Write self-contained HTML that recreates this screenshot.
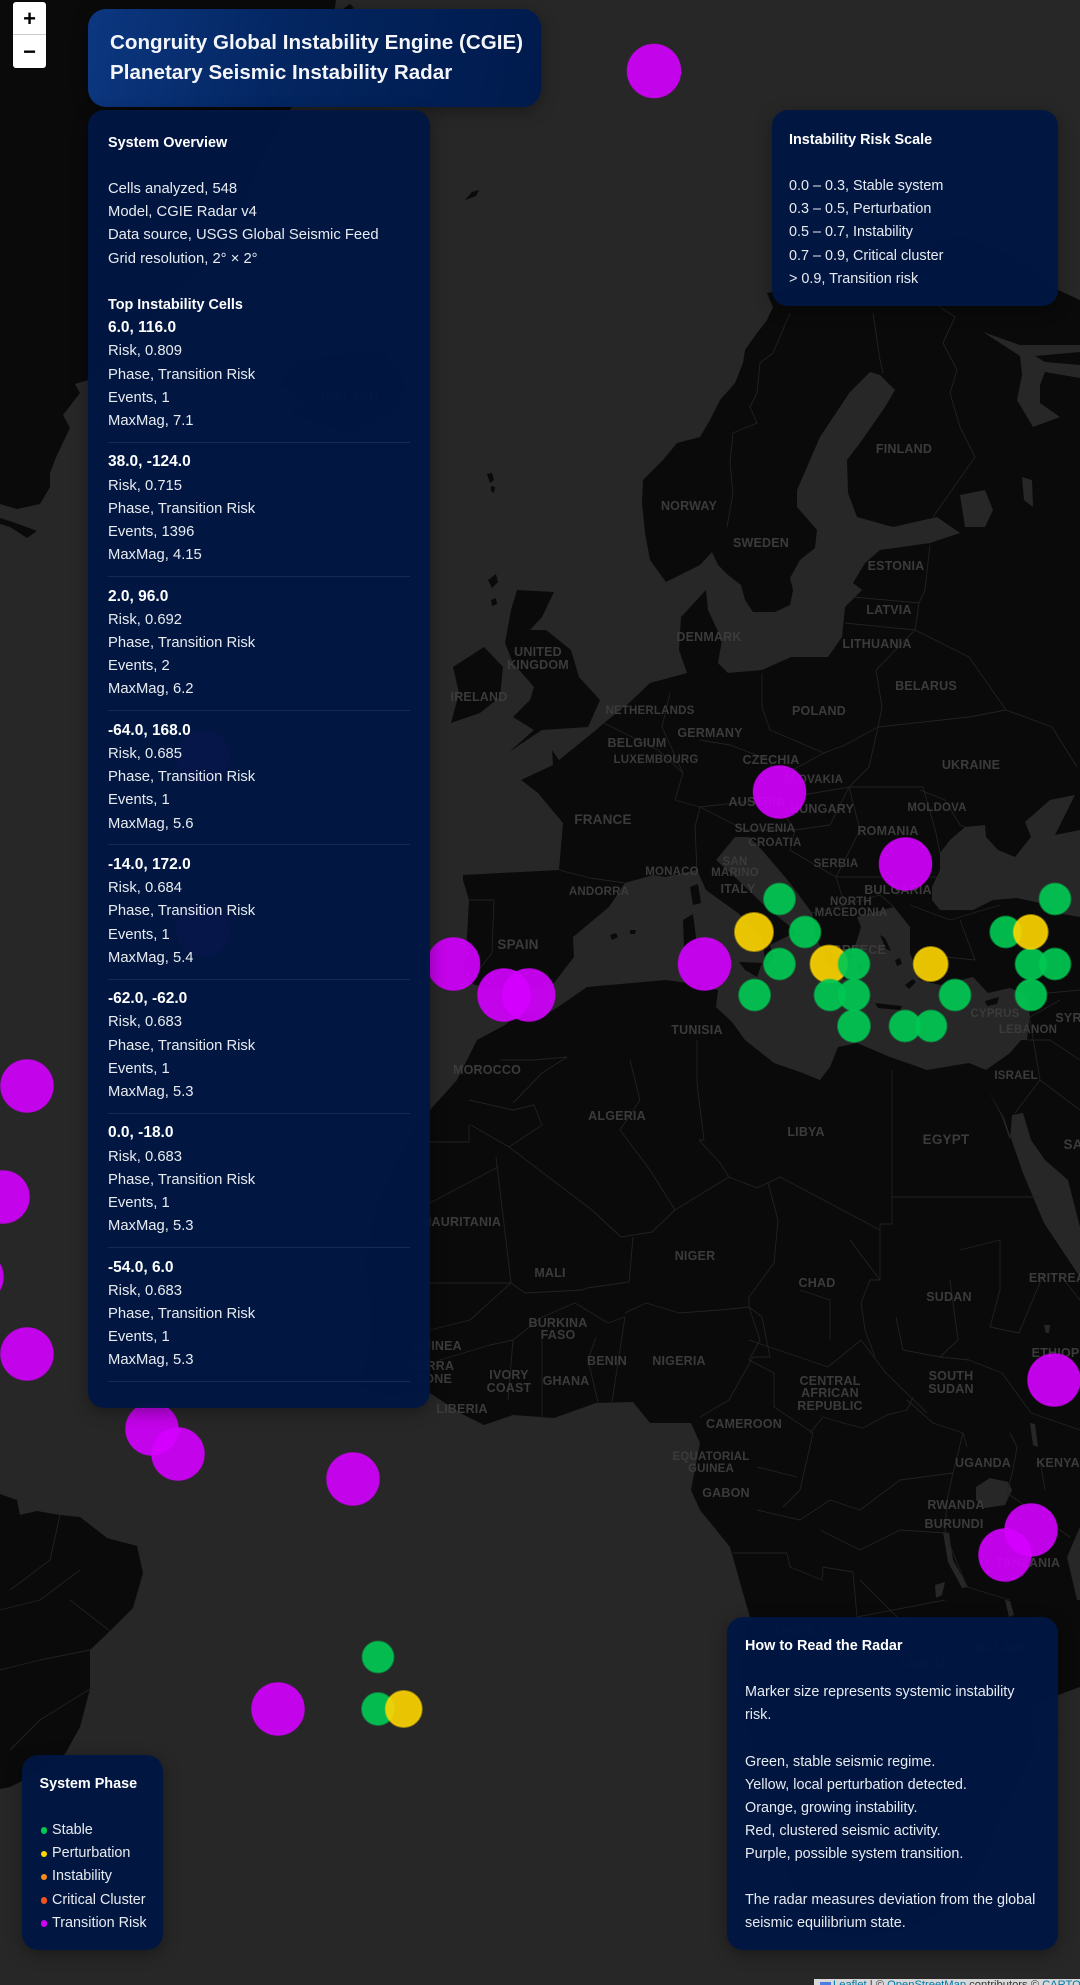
<!DOCTYPE html>
<html lang="en"><head><meta charset="utf-8"><title>CGIE Radar</title>
<style>
html,body{margin:0;padding:0;background:#272727;width:1080px;height:1985px;overflow:hidden}
body{position:relative;font-family:"Liberation Sans",Arial,sans-serif;color:#e8ebf0;filter:blur(.35px)}
svg.map{position:absolute;left:0;top:0}
.lbl text{font:bold 12.5px "Liberation Sans",Arial,sans-serif;fill:#3b3b3b;text-anchor:middle;letter-spacing:.2px}
.p{position:absolute;box-sizing:border-box;background:rgba(0,23,66,.965);border-radius:16px;box-shadow:0 4px 16px rgba(0,0,0,.35);font-size:14.4px;line-height:23.2px;overflow:hidden}
.p b{color:#fff}
.blk{border-bottom:1px solid rgba(255,255,255,.09);padding-bottom:8.7px;margin-bottom:8.5px}
.blk b{font-size:15.5px;line-height:0}
#title{left:88px;top:9px;width:453px;height:98px;padding:19px 0 0 22px;border-radius:18px;background:linear-gradient(100deg,#0c3780 0%,#032560 45%,#001a4c 100%);font-size:20.6px;line-height:30.4px;font-weight:bold;color:#f4f6fa;white-space:nowrap}
#ov{left:88px;top:110px;width:342px;height:1298px;padding:21.5px 20px 0 20px;font-size:14.8px}
#ov>b{font-size:14.4px;line-height:0}
#risk{left:772px;top:110px;width:286px;height:196px;padding:18.6px 17px 0 17px}
#how{left:727px;top:1617px;width:331px;height:333px;padding:18.2px 18px 0 18px;line-height:23.1px}
#phase{left:22px;top:1755px;width:141px;height:195px;padding:17.5px 0 0 17.5px;white-space:nowrap}
.d{display:inline-block;width:6.5px;height:6.5px;border-radius:50%;margin:0 5px 0 1px;vertical-align:0}
#zoom{position:absolute;left:13px;top:2px;width:33px;height:66px;background:#fff;border-radius:3px;box-shadow:0 0 0 1px rgba(0,0,0,.25)}
#zoom div{height:33px;box-sizing:border-box;text-align:center;color:#000;font:bold 22px/33px "Liberation Sans",Arial,sans-serif}
#zoom div:first-child{border-bottom:1px solid #ccc}
#attr{position:absolute;left:814px;top:1979px;width:266px;height:6px;background:rgba(255,255,255,.82);overflow:hidden;white-space:nowrap;font:11.2px/14px "Liberation Sans",Arial,sans-serif;color:#333}
#attr span{position:absolute;left:19px;top:-1px}
#attr i{position:absolute;left:6px;top:3px;width:11px;height:4px;background:#4c7be1}
#attr a{color:#0078a8;text-decoration:none}
</style></head><body>
<svg class="map" width="1080" height="1985" viewBox="0 0 1080 1985">
<rect width="1080" height="1985" fill="#272727"/>
<g fill="#0a0a0a">
<path d="M0,0L336,0 332,30 300,80 292,107 260,160 230,240 170,300 120,350 88,380 75,384 80,393 63,415 70,428 57,455 50,473 50,487 40,504 17,509 0,504Z"/>
<path d="M0,518L13,522 37,531 27,538 10,527 0,524Z"/>
<path d="M280,385L300,360 340,355 385,352 407,385 395,410 350,433 310,420 290,415 305,400Z"/>
<path d="M465,200L472,192 479,190 476,196Z"/>
<path d="M343,9L350,4 354,8 347,12Z"/>
<path d="M487,474l5,-1 2,7 -4,3zM491,486l4,1 -1,6 -3,-2zM488,580l8,-6 2,8 -6,6zM491,600l5,-2 1,6 -5,2z"/>
<path d="M1080,300L1058,290 1010,255 960,235 900,258 850,282 800,288 772,292 767,293 773,307 767,320 757,333 745,350 743,363 735,383 720,400 710,420 700,437 677,443 663,460 643,480 642,503 645,533 650,560 666,582 680,575 700,565 712,552 718,565 728,575 741,585 745,600 753,612 775,612 790,605 793,590 790,578 800,560 815,548 817,530 797,507 797,490 820,437 850,392 870,372 880,375 895,390 885,407 860,443 847,460 848,493 857,517 893,527 937,517 960,533 930,543 880,550 865,563 853,583 862,590 845,607 842,637 828,657 791,657 762,670 728,673 718,663 722,640 708,610 706,590 681,617 679,650 687,673 650,683 629,703 604,723 596,730 559,760 552,750 553,765 521,780 538,793 563,823 559,870 463,875 463,880 469,900 467,937 463,977 475,985 505,990 517,993 554,983 574,957 573,937 609,907 625,883 653,875 665,877 697,870 706,890 738,913 763,937 765,967 774,957 770,945 790,935 803,937 766,907 738,880 716,860 735,837 749,837 762,850 790,883 812,913 816,937 828,963 845,980 853,953 861,927 857,917 894,907 910,927 910,953 920,980 940,985 973,977 988,993 1010,988 1027,995 1030,1017 1027,1040 1021,1040 1010,1053 986,1070 969,1063 927,1070 890,1057 857,1043 838,1047 830,1067 820,1080 800,1072 774,1063 745,1040 732,1022 716,1007 718,990 700,985 687,983 666,980 587,987 558,1007 542,1017 520,1012 505,1025 477,1040 457,1080 430,1110 420,1120 395,1165 375,1210 365,1265 372,1310 370,1345 360,1385 385,1395 430,1393 460,1413 484,1425 513,1415 554,1418 596,1403 633,1402 650,1423 691,1423 700,1443 691,1490 700,1510 730,1547 743,1593 750,1617 740,1670 745,1720 770,1800 790,1880 810,1930 850,1935 905,1930 955,1905 985,1860 1000,1815 1035,1750 1031,1705 1080,1687 1080,1600 1077,1600 1067,1557 1080,1527Z"/>
<path d="M517,590L554,592 542,617 530,630 546,630 571,650 579,677 600,700 588,727 542,730 509,752 534,730 513,717 530,700 534,687 513,663 505,643 511,610Z"/>
<path d="M453,667L484,647 503,667 500,697 480,713 451,723 459,693Z"/>
<path d="M739,962L762,963 757,977 745,970Z"/>
<path d="M683,920L693,914 697,945 684,947Z"/>
<path d="M690,887L698,884 701,903 693,905Z"/>
<path d="M610,935l6,-2 2,4 -6,3zM630,930l6,0 -1,4 -5,0z"/>
<path d="M875,1003L902,1006 900,1010 878,1008Z"/>
<path d="M985,1001l14,-4 -2,7 -10,2z"/>
<path d="M880,935l5,3 6,13 -5,-2zM895,960l5,-2 2,6 -5,2zM905,985l8,-6 3,3 -7,7zM858,965l3,-3 2,8 -3,2z"/>
<path d="M0,1494L17,1500 20,1515 37,1511 60,1515 80,1517 107,1538 137,1546 143,1573 133,1608 110,1631 90,1650 90,1689 80,1727 65,1754 22,1781 10,1787 0,1789Z"/>
</g>
<g fill="#272727">
<path d="M940,853L950,840 965,827 985,825 986,837 998,850 1015,857 1031,837 1025,822 1050,800 1075,795 1060,825 1055,835 1080,830 1080,917 1057,913 1040,903 1017,898 993,900 973,910 940,910 932,900 932,887 940,870Z"/>
<path d="M988,1090L1004,1118 1023,1173 1044,1223 1064,1253 1080,1277 1080,1227 1068,1180 1045,1160 1031,1140 1023,1113 1012,1115 1010,1140 1002,1117Z"/>
<path d="M983,332L1000,343 1020,356 1022,375 1017,400 1033,427 1060,417 1040,403 1040,385 1045,372 1080,378 1080,365 1045,362 1035,356 1080,352 1080,345 1020,345Z"/>
<path d="M960,495L985,490 993,510 985,527 965,527Z"/>
<path d="M1022,477L1032,480 1033,507 1024,500Z"/>
<path d="M976,1487L990,1478 1008,1482 1012,1490 1005,1505 985,1508 976,1500Z"/>
<path d="M943,1532L949,1533 953,1560 968,1587 962,1588 948,1562Z"/>
<path d="M1005,1600L1010,1601 1014,1615 1009,1617Z"/>
<path d="M1030,1423L1035,1424 1038,1447 1033,1445Z"/>
<path d="M1044,1325L1050,1325 1049,1333 1046,1333Z"/>
<path d="M935,1585L945,1582 942,1595 936,1598Z"/>
<path d="M726,655l8,-5 4,8 -6,3z"/>
</g>
<g fill="none" stroke="#222" stroke-width=".9" stroke-linejoin="round">
<path d="M790,313L773,353 760,363 757,393 750,407 757,423 733,433 730,463 733,493 727,527"/>
<path d="M873,313L880,360 883,373M940,307L955,317 943,343 957,370 950,393 960,427 975,457 933,517"/>
<path d="M853,597L919,603M845,623L915,630M876,670L882,707 878,727 969,717 1006,710 1052,727 1077,767M915,630L969,657 1006,710M930,545L925,590 919,603 915,630 876,670"/>
<path d="M762,673L762,707 770,730 824,753 845,745 878,727M878,727L869,767 849,787"/>
<path d="M683,773L675,800M670,693L662,727 683,773M604,723L658,750 683,773M675,800L700,807 762,800 774,780 770,760 730,745 700,740"/>
<path d="M774,800L849,787 923,787 936,833 940,853M836,877L940,877M824,753L774,780M774,800L795,830 830,825 849,787 860,830 836,877 845,905 812,913M745,830L795,830 790,850 815,865 836,877"/>
<path d="M920,790L945,800 960,825 965,827"/>
<path d="M559,870L590,878 625,883M469,900L494,900 492,953 471,980M697,870L695,827 700,807 745,830"/>
<path d="M845,905L880,895 894,907M1027,995L1080,990M1030,1017L1060,1000M1027,1040L1050,1040 1080,1060"/>
<path d="M910,905L950,920 1000,905M960,920L975,960M1000,920L1040,960M925,955L975,960"/>
<path d="M471,1125L509,1147 592,1210 621,1237 652,1232 675,1210 729,1177 757,1188 780,1177 880,1230 880,1224 892,1224 892,1112 892,1070"/>
<path d="M892,1197L1039,1197M880,1230L880,1280 870,1280 861,1303 865,1330 875,1357"/>
<path d="M768,1183L778,1220 774,1263 749,1297 749,1307M697,1040L697,1083 704,1140 699,1140 720,1163 729,1177"/>
<path d="M496,1157L511,1283 430,1283M469,1100L513,1110 534,1105 542,1125 509,1147M469,1125L469,1142 430,1142M430,1203L498,1167"/>
<path d="M534,1060L567,1057 542,1073 513,1103M500,1060L534,1060M630,1060L640,1100 620,1130 650,1170 675,1210"/>
<path d="M810,1433L823,1417 843,1423 863,1428 887,1415 907,1410 913,1397M907,1400L933,1423 963,1433 967,1447"/>
<path d="M1010,1433L1017,1447 1013,1470 1007,1493 1070,1537M963,1433L953,1473 947,1500 945,1533 967,1587 1010,1600"/>
<path d="M733,1553L787,1553 790,1567 822,1580 823,1567 853,1572 857,1617 945,1600"/>
<path d="M783,1507L800,1490 813,1433 774,1407 774,1373M757,1467L797,1477"/>
<path d="M762,1317L770,1357 753,1357 729,1400 700,1417M625,1313L646,1303 679,1313 720,1310 749,1307 762,1317"/>
<path d="M625,1317L612,1402M596,1337L588,1360 598,1402M542,1340L542,1417M511,1283L525,1293 583,1290 587,1288 629,1282 633,1237"/>
<path d="M513,1340L542,1317 575,1303 608,1323 625,1317M430,1330L470,1320 511,1283M490,1345L513,1340 508,1400M440,1360L490,1345"/>
<path d="M896,1317L903,1350 940,1357 969,1360 1002,1373 1031,1413M990,1327L1019,1333 1044,1273M861,1340L886,1373 927,1413"/>
<path d="M749,1340L828,1367 861,1340M749,1307L760,1340 749,1360 774,1373M800,1290L830,1300 830,1340M1031,1413L1080,1430M1040,1460L1045,1490"/>
<path d="M960,1250L1000,1240 1000,1290 990,1327M950,1280L958,1340 940,1357M850,1240L880,1280"/>
<path d="M1040,1080L1080,1110M1030,1020L1040,1080 1015,1113M1060,1275L1080,1300"/>
<path d="M757,1510L800,1520 830,1500 860,1510 900,1480 953,1473M820,1530L860,1550 900,1530 945,1533"/>
<path d="M860,1580L900,1620 950,1650 1000,1700M780,1700L850,1690 900,1720 950,1800"/>
<path d="M60,1515L50,1560 10,1590M80,1570L40,1600 0,1610M110,1631L70,1600M90,1650L40,1660 0,1670M90,1689L40,1720 10,1750"/>
</g>
<g class="lbl">
<text x="350" y="401">ICELAND</text>
<text x="904" y="453">FINLAND</text><text x="689" y="510">NORWAY</text><text x="761" y="547">SWEDEN</text>
<text x="896" y="570">ESTONIA</text><text x="889" y="614">LATVIA</text><text x="877" y="648">LITHUANIA</text>
<text x="538" y="656">UNITED</text><text x="538" y="669">KINGDOM</text><text x="479" y="701">IRELAND</text>
<text x="709" y="641">DENMARK</text><text x="650" y="714" style="font-size:11.5px">NETHERLANDS</text><text x="710" y="737">GERMANY</text>
<text x="637" y="747">BELGIUM</text><text x="656" y="763" style="font-size:11.5px">LUXEMBOURG</text><text x="771" y="764">CZECHIA</text>
<text x="819" y="715">POLAND</text><text x="926" y="690">BELARUS</text><text x="971" y="769">UKRAINE</text>
<text x="813" y="783" style="font-size:11.5px">SLOVAKIA</text><text x="937" y="811" style="font-size:11.5px">MOLDOVA</text>
<text x="757" y="806">AUSTRIA</text><text x="822" y="813">HUNGARY</text><text x="603" y="824" style="font-size:13.5px">FRANCE</text>
<text x="888" y="835">ROMANIA</text><text x="765" y="832" style="font-size:11.5px">SLOVENIA</text><text x="775" y="846" style="font-size:11.5px">CROATIA</text>
<text x="836" y="867" style="font-size:11.5px">SERBIA</text><text x="672" y="875" style="font-size:11.5px">MONACO</text>
<text x="735" y="865" style="font-size:11.5px">SAN</text><text x="735" y="876" style="font-size:11.5px">MARINO</text>
<text x="599" y="895" style="font-size:11.5px">ANDORRA</text><text x="738" y="893">ITALY</text><text x="898" y="894">BULGARIA</text>
<text x="851" y="905" style="font-size:11.5px">NORTH</text><text x="851" y="916" style="font-size:11.5px">MACEDONIA</text>
<text x="518" y="949" style="font-size:13.5px">SPAIN</text><text x="859" y="954">GREECE</text><text x="697" y="1034">TUNISIA</text>
<text x="995" y="1017" style="font-size:11.5px">CYPRUS</text><text x="1028" y="1033" style="font-size:11.5px">LEBANON</text><text x="1075" y="1022">SYRIA</text>
<text x="487" y="1074">MOROCCO</text><text x="1016" y="1079" style="font-size:11.5px">ISRAEL</text><text x="617" y="1120">ALGERIA</text>
<text x="806" y="1136">LIBYA</text><text x="946" y="1144" style="font-size:13.5px">EGYPT</text><text x="1085" y="1149" style="font-size:13.5px">SAUDI</text>
<text x="461" y="1226">MAURITANIA</text><text x="695" y="1260">NIGER</text><text x="550" y="1277">MALI</text><text x="817" y="1287">CHAD</text>
<text x="1057" y="1282">ERITREA</text><text x="949" y="1301">SUDAN</text><text x="558" y="1327">BURKINA</text><text x="558" y="1339">FASO</text>
<text x="1062" y="1357">ETHIOPIA</text><text x="437" y="1350">GUINEA</text><text x="607" y="1365">BENIN</text><text x="679" y="1365">NIGERIA</text>
<text x="430" y="1370">SIERRA</text><text x="430" y="1383">LEONE</text><text x="509" y="1379">IVORY</text><text x="509" y="1392">COAST</text>
<text x="566" y="1385">GHANA</text><text x="951" y="1380">SOUTH</text><text x="951" y="1393">SUDAN</text><text x="830" y="1385">CENTRAL</text>
<text x="830" y="1397">AFRICAN</text><text x="830" y="1410">REPUBLIC</text><text x="462" y="1413">LIBERIA</text><text x="744" y="1428">CAMEROON</text>
<text x="711" y="1460" style="font-size:11.5px">EQUATORIAL</text><text x="711" y="1472" style="font-size:11.5px">GUINEA</text>
<text x="983" y="1467">UGANDA</text><text x="1058" y="1467">KENYA</text><text x="726" y="1497">GABON</text>
<text x="956" y="1509">RWANDA</text><text x="954" y="1528">BURUNDI</text><text x="1028" y="1567">TANZANIA</text>
<text x="800" y="1635">ANGOLA</text><text x="923" y="1668">ZAMBIA</text><text x="1000" y="1652">MALAWI</text><text x="1015" y="1733" style="fill:#1c1c1c">MOZAMBIQUE</text>
</g>
<g fill="#d500ff" fill-opacity=".9" stroke="#d500ff" stroke-opacity=".35" stroke-width="1">
<circle cx="654" cy="71" r="27"/><circle cx="779.5" cy="792" r="26.5"/><circle cx="905.5" cy="864" r="26.5"/>
<circle cx="704.5" cy="964" r="26.5"/><circle cx="453.5" cy="964" r="26.5"/><circle cx="504" cy="995" r="26.5"/><circle cx="528.7" cy="995" r="26.5"/>
<circle cx="27" cy="1086" r="26.5"/><circle cx="3" cy="1197" r="26.5"/><circle cx="-23" cy="1277" r="26.5"/><circle cx="27" cy="1354" r="26.5"/>
<circle cx="152" cy="1429" r="26.5"/><circle cx="178" cy="1454" r="26.5"/><circle cx="353" cy="1479" r="26.5"/><circle cx="278" cy="1709" r="26.5"/>
<circle cx="1054" cy="1380" r="26.5"/><circle cx="1031" cy="1530" r="26.5"/><circle cx="1005" cy="1555" r="26.5"/>
<circle cx="203" cy="757" r="26.5"/><circle cx="203" cy="930" r="26.5"/>
</g>
<g fill="#ffd600" fill-opacity=".9" stroke="#ffd600" stroke-opacity=".55" stroke-width="2">
<circle cx="829" cy="964" r="18.5"/>
</g>
<g fill="#00c853" fill-opacity=".92" stroke="#00c853" stroke-opacity=".5" stroke-width="2">
<circle cx="1055" cy="899" r="15.5"/><circle cx="1005.7" cy="932" r="15.5"/><circle cx="1031" cy="964" r="15.5"/><circle cx="1055" cy="964" r="15.5"/>
<circle cx="1031" cy="995" r="15.5"/><circle cx="955" cy="995" r="15.5"/><circle cx="905" cy="1026" r="15.5"/><circle cx="931" cy="1026" r="15.5"/>
<circle cx="854" cy="964" r="15.5"/><circle cx="830" cy="995" r="15.5"/><circle cx="854" cy="995" r="15.5"/><circle cx="854" cy="1026" r="16"/>
<circle cx="779.5" cy="964" r="15.5"/><circle cx="754.6" cy="995" r="15.5"/><circle cx="805" cy="932" r="15.5"/><circle cx="779.5" cy="899" r="15.5"/>
<circle cx="378" cy="1657" r="15.5"/><circle cx="378" cy="1709" r="16"/>
</g>
<g fill="#ffd600" fill-opacity=".9" stroke="#ffd600" stroke-opacity=".55" stroke-width="2">
<circle cx="1030.7" cy="932" r="17"/><circle cx="930.7" cy="964" r="17"/><circle cx="754" cy="932" r="19"/><circle cx="403.7" cy="1709" r="18"/>
</g>
</svg>

<div id="zoom"><div>+</div><div>−</div></div>

<div class="p" id="title">Congruity Global Instability Engine (CGIE)<br>Planetary Seismic Instability Radar</div>

<div class="p" id="ov">
<b>System Overview</b><br><br>
Cells analyzed, 548<br>
Model, CGIE Radar v4<br>
Data source, USGS Global Seismic Feed<br>
Grid resolution, 2° × 2°<br><br>
<b>Top Instability Cells</b><br>
<div class="blk"><b>6.0, 116.0</b><br>Risk, 0.809<br>Phase, Transition Risk<br>Events, 1<br>MaxMag, 7.1</div>
<div class="blk"><b>38.0, -124.0</b><br>Risk, 0.715<br>Phase, Transition Risk<br>Events, 1396<br>MaxMag, 4.15</div>
<div class="blk"><b>2.0, 96.0</b><br>Risk, 0.692<br>Phase, Transition Risk<br>Events, 2<br>MaxMag, 6.2</div>
<div class="blk"><b>-64.0, 168.0</b><br>Risk, 0.685<br>Phase, Transition Risk<br>Events, 1<br>MaxMag, 5.6</div>
<div class="blk"><b>-14.0, 172.0</b><br>Risk, 0.684<br>Phase, Transition Risk<br>Events, 1<br>MaxMag, 5.4</div>
<div class="blk"><b>-62.0, -62.0</b><br>Risk, 0.683<br>Phase, Transition Risk<br>Events, 1<br>MaxMag, 5.3</div>
<div class="blk"><b>0.0, -18.0</b><br>Risk, 0.683<br>Phase, Transition Risk<br>Events, 1<br>MaxMag, 5.3</div>
<div class="blk"><b>-54.0, 6.0</b><br>Risk, 0.683<br>Phase, Transition Risk<br>Events, 1<br>MaxMag, 5.3</div>
</div>

<div class="p" id="risk">
<b>Instability Risk Scale</b><br><br>
0.0 – 0.3, Stable system<br>
0.3 – 0.5, Perturbation<br>
0.5 – 0.7, Instability<br>
0.7 – 0.9, Critical cluster<br>
&gt; 0.9, Transition risk
</div>

<div class="p" id="how">
<b>How to Read the Radar</b><br><br>
Marker size represents systemic instability<br>risk.<br><br>
Green, stable seismic regime.<br>
Yellow, local perturbation detected.<br>
Orange, growing instability.<br>
Red, clustered seismic activity.<br>
Purple, possible system transition.<br><br>
The radar measures deviation from the global<br>seismic equilibrium state.
</div>

<div class="p" id="phase">
<b>System Phase</b><br><br>
<span class="d" style="background:#00c853"></span>Stable<br>
<span class="d" style="background:#ffd600"></span>Perturbation<br>
<span class="d" style="background:#ff8c1a"></span>Instability<br>
<span class="d" style="background:#f4511e"></span>Critical Cluster<br>
<span class="d" style="background:#d500f9"></span>Transition Risk
</div>

<div id="attr"><i></i><span><a>Leaflet</a> | © <a>OpenStreetMap</a> contributors © <a>CARTO</a></span></div>
</body></html>
